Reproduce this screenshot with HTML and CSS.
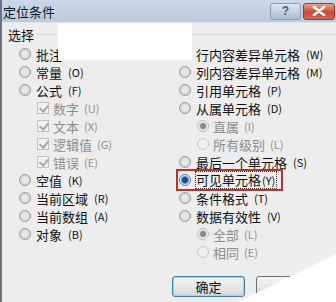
FILE: index.html
```html
<!DOCTYPE html>
<html lang="zh">
<head>
    <meta charset="UTF-8">
    <title>定位条件</title>
    <link rel="stylesheet" href="styles.css">
</head>
<body>

    <div class="dialog">
        <div class="titlebar">
            <span class="title">定位条件</span>
            <div class="title-buttons">
                <div class="tbtn help">?</div>
                <div class="tbtn close">
                    <svg width="14" height="10" viewBox="0 0 14 10"><path d="M2 1 L12 9 M12 1 L2 9" stroke="#fff" stroke-width="2.6" stroke-linecap="round"/></svg>
                </div>
            </div>
        </div>

        <div class="content">
            <div class="legend"><span>选择</span></div>

            <div class="options">
                <div class="col col-left">
                    <div class="row"><i class="radio"></i>批注</div>
                    <div class="row"><i class="radio"></i>常量<span class="key">(O)</span></div>
                    <div class="row"><i class="radio"></i>公式<span class="key">(F)</span></div>
                    <div class="row sub off"><i class="check"></i>数字<span class="key">(U)</span></div>
                    <div class="row sub off"><i class="check"></i>文本<span class="key">(X)</span></div>
                    <div class="row sub off"><i class="check"></i>逻辑值<span class="key">(G)</span></div>
                    <div class="row sub off"><i class="check"></i>错误<span class="key">(E)</span></div>
                    <div class="row"><i class="radio"></i>空值<span class="key">(K)</span></div>
                    <div class="row"><i class="radio"></i>当前区域<span class="key">(R)</span></div>
                    <div class="row"><i class="radio"></i>当前数组<span class="key">(A)</span></div>
                    <div class="row"><i class="radio"></i>对象<span class="key">(B)</span></div>
                </div>
                <div class="col col-right">
                    <div class="row"><i class="radio"></i>行内容差异单元格<span class="key">(W)</span></div>
                    <div class="row"><i class="radio"></i>列内容差异单元格<span class="key">(M)</span></div>
                    <div class="row"><i class="radio"></i>引用单元格<span class="key">(P)</span></div>
                    <div class="row"><i class="radio"></i>从属单元格<span class="key">(D)</span></div>
                    <div class="row sub off"><i class="radio checked"></i>直属<span class="key">(I)</span></div>
                    <div class="row sub off"><i class="radio"></i>所有级别<span class="key">(L)</span></div>
                    <div class="row"><i class="radio"></i>最后一个单元格<span class="key">(S)</span></div>
                    <div class="row marked"><i class="radio checked"></i><span class="focus">可见单元格<span class="key">(Y)</span></span></div>
                    <div class="row"><i class="radio"></i>条件格式<span class="key">(T)</span></div>
                    <div class="row"><i class="radio"></i>数据有效性<span class="key">(V)</span></div>
                    <div class="row sub off"><i class="radio checked"></i>全部<span class="key">(L)</span></div>
                    <div class="row sub off"><i class="radio"></i>相同<span class="key">(E)</span></div>
                </div>
            </div>

            <div class="buttons">
                <button class="btn default">确定</button>
                <button class="btn">取消</button>
            </div>
        </div>

        <div class="blank"></div>
        <div class="corner"></div>
    </div>

</body>
</html>
```

FILE: styles.css
```css
body {
    margin: 0;
    font-family: "Noto Sans CJK SC", "Liberation Sans", sans-serif;
    font-size: 13px;
    color: #111;
}
.dialog {
    position: relative;
    width: 336px;
    height: 302px;
    overflow: hidden;
    background: #ededed;
    border-left: 2px solid #6d7680;
    box-sizing: border-box;
}
.titlebar {
    height: 22px;
    display: flex;
    align-items: center;
    justify-content: space-between;
    background: linear-gradient(#cbd8e6, #bccbdc);
    border-bottom: 1px solid #dfe6ee;
}
.title { padding-left: 1px; font-size: 13px; color: #101820; }
.title-buttons { display: flex; gap: 2px; padding-right: 1px; }
.tbtn {
    height: 17px;
    border: 1px solid #8c9bb0;
    border-radius: 3px;
    display: flex;
    align-items: center;
    justify-content: center;
    box-sizing: border-box;
}
.tbtn.help {
    background: linear-gradient(#dce7f2, #aabdd3);
    color: #4a5f78;
    font-family: "Liberation Sans", sans-serif;
    font-weight: bold;
    font-size: 12px;
    width: 31px;
}
.tbtn.close {
    background: linear-gradient(#e8a393, #c84a34 55%, #d3674f);
    border-color: #8e3b2f;
    width: 32px;
}

.content { padding: 0 0 0 16px; }
.legend {
    height: 22px;
    display: flex;
    align-items: center;
    gap: 4px;
    margin-left: -10px;
}
.legend::after {
    content: "";
    flex: 1;
    border-top: 1px solid #d3dbe1;
}

.options { display: flex; }
.col-left { width: 160px; padding-left: 1px; }
.row {
    height: 18px;
    display: flex;
    align-items: center;
    gap: 5px;
    white-space: nowrap;
}
.row.sub { padding-left: 18px; gap: 4px; }
.row.off { color: #8d8d8d; }
.key {
    font-size: 11px;
    margin-left: 1px;
}

.radio {
    width: 12px;
    height: 12px;
    box-sizing: border-box;
    border-radius: 50%;
    border: 1px solid #9aa0a6;
    background: radial-gradient(circle at 50% 50%, #e8e8e8 0 2.5px, #cdd0d3 5px);
    flex: none;
}
.off .radio { border-color: #c8c8c8; background: #f0f0f0; }
.radio.checked {
    background: radial-gradient(circle, #1b4f8f 0 2.5px, #5d97cf 3.5px, #e4ebf1 4.5px);
    border-color: #5f7f9c;
}
.off .radio.checked {
    background: radial-gradient(circle, #8a8a8a 0 2.5px, #d2d2d2 3.5px, #f0f0f0 4.5px);
    border-color: #bdbdbd;
}
.check {
    width: 12px;
    height: 12px;
    box-sizing: border-box;
    border: 1px solid #c1c1c1;
    background: #f2f2f2;
    flex: none;
    position: relative;
}
.check::after {
    content: "";
    position: absolute;
    left: 3px;
    top: 0px;
    width: 4px;
    height: 7px;
    border: solid #a9a9a9;
    border-width: 0 2px 2px 0;
    transform: rotate(40deg);
}

.row.marked { position: relative; }
.row.marked::after {
    content: "";
    position: absolute;
    left: -3px;
    top: -2px;
    width: 107px;
    height: 22px;
    border: 2px solid #b8312e;
    box-sizing: border-box;
}
.focus { outline: 1px dotted #333; line-height: 15px; padding-right: 1px; }

.buttons {
    display: flex;
    gap: 11px;
    padding-left: 154px;
    margin-top: 15px;
}
.btn {
    width: 73px;
    height: 21px;
    font-family: "Noto Sans CJK SC", sans-serif;
    font-size: 13px;
    color: #111;
    border: 1px solid #707070;
    border-radius: 3px;
    background: linear-gradient(#f4f4f4, #e8e8e8 50%, #d6d6d6);
    padding: 0;
    line-height: 17px;
}
.btn.default {
    border-color: #3c7fb1;
    box-shadow: inset 0 0 0 1px #9ed3ea;
}

.blank {
    position: absolute;
    left: 56px;
    top: 23px;
    width: 134px;
    height: 37px;
    background: #fdfdfd;
}
.corner {
    position: absolute;
    left: 230px;
    top: 250px;
    width: 106px;
    height: 52px;
    background: #fff;
    clip-path: polygon(106px 3px, 106px 52px, 6px 52px);
}
```
